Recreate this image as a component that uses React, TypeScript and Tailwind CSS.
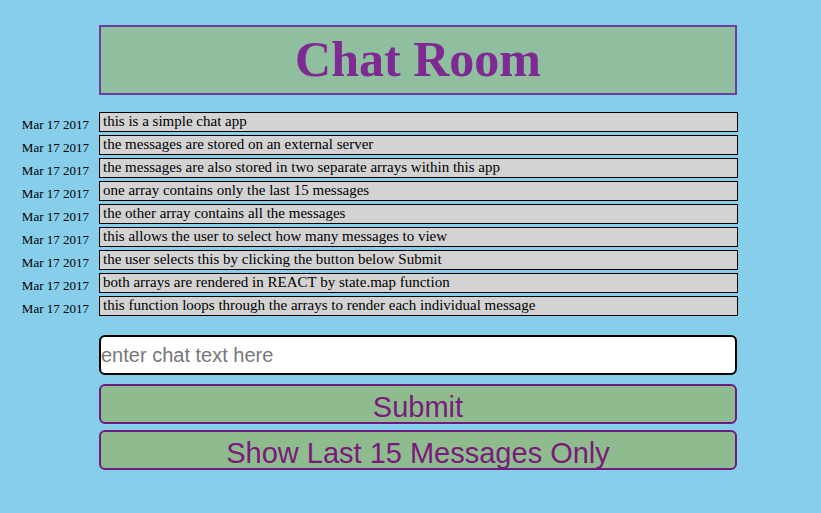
import { useState } from 'react'

const messages = [
  'this is a simple chat app',
  'the messages are stored on an external server',
  'the messages are also stored in two separate arrays within this app',
  'one array contains only the last 15 messages',
  'the other array contains all the messages',
  'this allows the user to select how many messages to view',
  'the user selects this by clicking the button below Submit',
  'both arrays are rendered in REACT by state.map function',
  'this function loops through the arrays to render each individual message',
]

export default function App() {
  const [text, setText] = useState('')

  return (
    <div className="min-h-screen w-full bg-[#87CEEB] pt-[25px] font-['Liberation_Serif',serif]">
      {/* header */}
      <div className="ml-[99px] w-[638px] h-[70px] flex items-center justify-center bg-[#8FBF9F] border-2 border-[#6b3d9c]">
        <h1 className="text-[50px] font-bold leading-none text-[#7f2a93] pb-[2px]">Chat Room</h1>
      </div>

      {/* messages */}
      <div className="mt-[17px] flex flex-col gap-[3px]">
        {messages.map((m, i) => (
          <div key={i} className="flex h-[20px]">
            <div className="w-[99px] shrink-0 pr-[10px] pt-[5px] text-right text-[13px] leading-[16px] text-black">
              Mar 17 2017
            </div>
            <div className="w-[639px] h-[20px] border border-black bg-[#D3D3D3] pl-[3px] text-[15px] leading-[16px] text-black">
              {m}
            </div>
          </div>
        ))}
      </div>

      {/* input + buttons */}
      <div className="ml-[99px] w-[638px] mt-[19px] flex flex-col font-['Liberation_Sans',sans-serif]">
        <input
          value={text}
          onChange={e => setText(e.target.value)}
          placeholder="enter chat text here"
          className="h-[40px] w-full rounded-[6px] border-2 border-black bg-white px-0 text-[20px] text-black placeholder:text-[#777] outline-none"
        />
        <button className="mt-[9px] h-[40px] w-full rounded-[6px] border-2 border-[#6e1a80] bg-[#8FBC8F] text-[29px] leading-none text-[#7a1a7a] pt-[6px]">
          Submit
        </button>
        <button className="mt-[6px] h-[40px] w-full rounded-[6px] border-2 border-[#6e1a80] bg-[#8FBC8F] text-[29px] leading-none text-[#7a1a7a] pt-[6px]">
          Show Last 15 Messages Only
        </button>
      </div>
    </div>
  )
}
